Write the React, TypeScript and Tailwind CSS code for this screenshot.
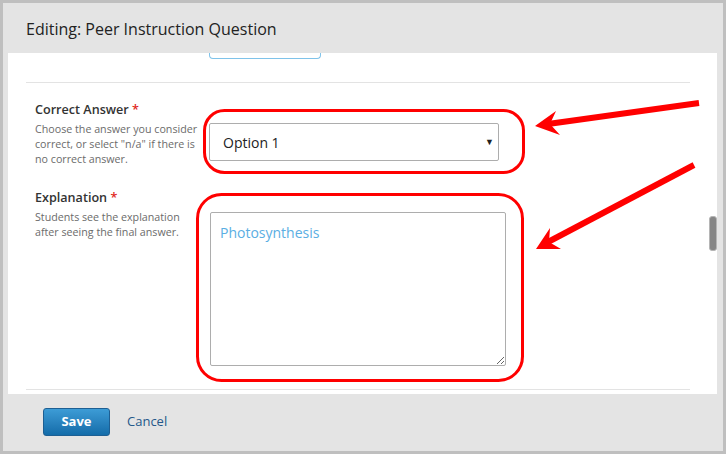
import React from "react";

const font = { fontFamily: '"Open Sans", "Noto Sans", sans-serif' };

const Field = ({
  label,
  help,
  children,
  className,
}: {
  label: string;
  help: React.ReactNode;
  children: React.ReactNode;
  className?: string;
}) => (
  <div className={`flex ${className ?? ""}`}>
    <div className="w-[183px] shrink-0 pl-[9px]">
      <div className="text-[12.6px] font-semibold leading-[18px] text-[#333]">
        {label} <span className="text-[#e0261c]">*</span>
      </div>
      <div className="mt-[3px] whitespace-nowrap text-[10.7px] leading-[15px] text-[#6b6b6b]">{help}</div>
    </div>
    {children}
  </div>
);

export default function App() {
  return (
    <div
      className="relative flex h-[454px] w-[726px] flex-col border-[3px] border-[#bfbfbf] bg-[#e4e4e4]"
      style={font}
    >
      {/* Header */}
      <div className="flex h-[50px] shrink-0 items-center px-[23px] pt-[2px] text-[16px] text-[#222]">
        Editing: Peer Instruction Question
      </div>

      {/* Scrolled body */}
      <div className="ml-[5px] mr-[6px] flex h-[341px] shrink-0 overflow-hidden bg-white">
        <div className="flex-1 pl-[18px] pr-[19px]">
          <div className="ml-[183px] h-[6px] w-[112px] rounded-b-[4px] border-x border-b border-[#7fc3ea]" />
          <div className="mt-[23px] border-t border-[#e3e3e3]" />

          <Field
            className="pt-[18px]"
            label="Correct Answer"
            help={
              <>
                Choose the answer you consider
                <br />
                correct, or select "n/a" if there is
                <br />
                no correct answer.
              </>
            }
          >
            <div className="mt-[22px] flex h-[38px] w-[290px] items-center justify-between rounded-[2px] border border-[#adadad] pl-[13px] pr-[4px] text-[14px] text-[#222]">
              <span>Option 1</span>
              <span className="text-[9px] text-[#222]">▼</span>
            </div>
          </Field>

          <Field
            className="pt-[22px]"
            label="Explanation"
            help={
              <>
                Students see the explanation
                <br />
                after seeing the final answer.
              </>
            }
          >
            <textarea
              readOnly
              defaultValue="Photosynthesis"
              className="ml-[1px] mt-[23px] h-[154px] w-[296px] rounded-[2px] border border-[#adadad] px-[9px] py-[9px] text-[14px] leading-[22px] text-[#5aaee3] outline-none"
              style={font}
            />
          </Field>

          <div className="mt-[23px] border-t border-[#e3e3e3]" />
        </div>

        {/* Scrollbar */}
        <div className="relative w-[8px] shrink-0">
          <div className="absolute left-0 top-[163px] h-[35px] w-[8px] rounded-[3px] border border-[#b5b5b5] bg-[#868686]" />
        </div>
      </div>

      {/* Footer */}
      <div className="flex flex-1 items-center gap-[17px] pl-[40px] pb-[2px]">
        <button className="h-[28px] w-[67px] rounded-[3px] border border-[#1d5f93] bg-gradient-to-b from-[#3d9cd6] to-[#136ca9] text-[13px] font-bold text-white">
          Save
        </button>
        <span className="text-[13px] text-[#24588a]">Cancel</span>
      </div>

      {/* Red annotations */}
      <svg className="pointer-events-none absolute left-[-3px] top-[-3px]" width="726" height="454" viewBox="0 0 726 454">
        <rect x="204.5" y="110.5" width="319" height="62" rx="20" fill="none" stroke="#ff0000" strokeWidth="3" />
        <rect x="197.5" y="194.5" width="325" height="186" rx="24" fill="none" stroke="#ff0000" strokeWidth="3" />
        <line x1="699" y1="103" x2="548" y2="124" stroke="#ff0000" strokeWidth="6" />
        <polygon points="535,126 556,111 550,124 560,135" fill="#ff0000" />
        <line x1="694" y1="165" x2="548" y2="242" stroke="#ff0000" strokeWidth="6" />
        <polygon points="536,249 550,228 549,242 561,249" fill="#ff0000" />
      </svg>
    </div>
  );
}
